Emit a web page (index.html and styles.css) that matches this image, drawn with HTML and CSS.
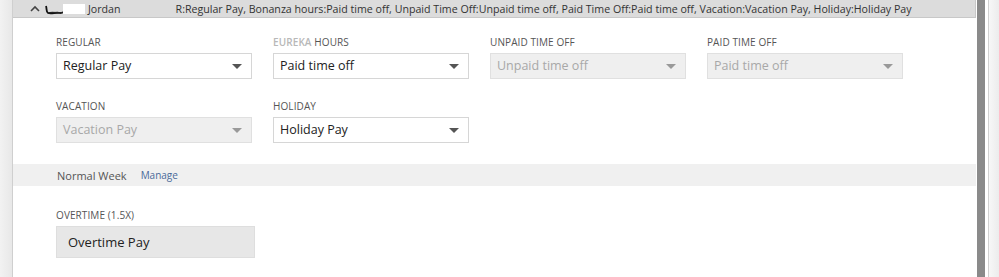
FILE: index.html
```html
<!DOCTYPE html>
<html lang="en">
<head>
  <meta charset="UTF-8">
  <title>Pay Mapping</title>
  <link rel="stylesheet" href="styles.css">
</head>
<body>
  <div class="page">
    <div class="gutter"></div>

    <div class="panel">
      <div class="row-head">
        <span class="caret">
          <svg width="10" height="7" viewBox="0 0 10 7"><path d="M1 6 L5 2 L9 6" fill="none" stroke="#444" stroke-width="1.6"/></svg>
        </span>
        <span class="redact">
          <svg width="42" height="12" viewBox="0 0 42 12">
            <path d="M2 3 C3 6 2 9 4 10 C8 11 12 9 16 10 C18 10 20 9 22 9" fill="none" stroke="#111" stroke-width="1.8"/>
            <path d="M4 10 C9 8 14 11 20 9" fill="none" stroke="#222" stroke-width="1.2"/>
            <rect x="19" y="1" width="22" height="10" fill="#fff"/>
          </svg>
        </span>
        <span class="name">Jordan</span>
        <span class="summary">R:Regular Pay, Bonanza hours:Paid time off, Unpaid Time Off:Unpaid time off, Paid Time Off:Paid time off, Vacation:Vacation Pay, Holiday:Holiday Pay</span>
      </div>

      <div class="fields">
        <div class="field">
          <label>REGULAR</label>
          <div class="select">Regular Pay<span class="arrow"></span></div>
        </div>
        <div class="field">
          <label><span class="brand">EUREKA</span> HOURS</label>
          <div class="select">Paid time off<span class="arrow"></span></div>
        </div>
        <div class="field">
          <label>UNPAID TIME OFF</label>
          <div class="select disabled">Unpaid time off<span class="arrow"></span></div>
        </div>
        <div class="field">
          <label>PAID TIME OFF</label>
          <div class="select disabled">Paid time off<span class="arrow"></span></div>
        </div>
        <div class="field">
          <label>VACATION</label>
          <div class="select disabled">Vacation Pay<span class="arrow"></span></div>
        </div>
        <div class="field">
          <label>HOLIDAY</label>
          <div class="select">Holiday Pay<span class="arrow"></span></div>
        </div>
      </div>

      <div class="week-bar">
        <span class="week">Normal Week</span>
        <a href="#" class="manage">Manage</a>
      </div>

      <div class="overtime">
        <label>OVERTIME (1.5X)</label>
        <div class="readonly">Overtime Pay</div>
      </div>
    </div>

    <div class="scroll">
      <div class="thumb"></div>
    </div>
    <div class="edge"></div>
  </div>
</body>
</html>
```

FILE: styles.css
```css
body {
  margin: 0;
  font-family: "Open Sans", "Liberation Sans", sans-serif;
  background: #fff;
  color: #333;
}

.page {
  display: flex;
  height: 277px;
  overflow: hidden;
}

.gutter {
  width: 12px;
  background: linear-gradient(to right, #f2f2f2, #e8e8e8);
  border-right: 1px solid #cfcfcf;
}

.panel {
  width: 963px;
  background: #fff;
}

.row-head {
  height: 17px;
  background: #dcdcdc;
  border-bottom: 1px solid #c8c8c8;
  border-right: 1px solid #c8c8c8;
  display: flex;
  align-items: center;
  font-size: 10.65px;
  color: #333;
}

.caret {
  margin-left: 17px;
  display: flex;
}

.redact {
  margin-left: 4px;
  display: flex;
}

.name {
  margin-left: 2px;
}

.summary {
  margin-left: 55px;
  white-space: nowrap;
}

.fields {
  display: grid;
  grid-template-columns: repeat(4, 196px);
  column-gap: 21px;
  row-gap: 19px;
  padding: 16px 0 0 43px;
}

label {
  display: block;
  font-size: 10px;
  color: #555;
  height: 16px;
  line-height: 16px;
  margin-bottom: 3px;
  letter-spacing: 0.1px;
}

.brand {
  color: #b8b8b8;
  font-weight: 600;
}

.select {
  position: relative;
  height: 24px;
  line-height: 24px;
  border: 1px solid #d6d6d6;
  background: #fff;
  padding-left: 6px;
  font-size: 12.5px;
  color: #222;
}

.select.disabled {
  background: #efefef;
  border-color: #e0e0e0;
  color: #a8a8a8;
}

.arrow {
  position: absolute;
  right: 9px;
  top: 10px;
  border-left: 5px solid transparent;
  border-right: 5px solid transparent;
  border-top: 5px solid #555;
}

.select.disabled .arrow {
  border-top-color: #999;
}

.week-bar {
  margin-top: 21px;
  height: 22px;
  background: #f0f0f0;
  display: flex;
  align-items: center;
  padding-left: 44px;
  font-size: 11px;
}

.week {
  color: #555;
}

.manage {
  margin-left: 14px;
  color: #4a6a9a;
  text-decoration: none;
  font-size: 10px;
}

.overtime {
  padding: 21px 0 0 43px;
}

.readonly {
  width: 186px;
  height: 30px;
  line-height: 30px;
  background: #e7e7e7;
  border: 1px solid #dedede;
  padding-left: 11px;
  font-size: 13px;
  color: #222;
}

.scroll {
  width: 12px;
  background: #fff;
}

.thumb {
  margin-left: 1px;
  width: 8px;
  height: 100%;
  background: #8a8a8a;
}

.edge {
  flex: 1;
  border-left: 1px solid #d0d0d0;
  background: linear-gradient(to right, #f7f7f7, #ececec);
}
```
